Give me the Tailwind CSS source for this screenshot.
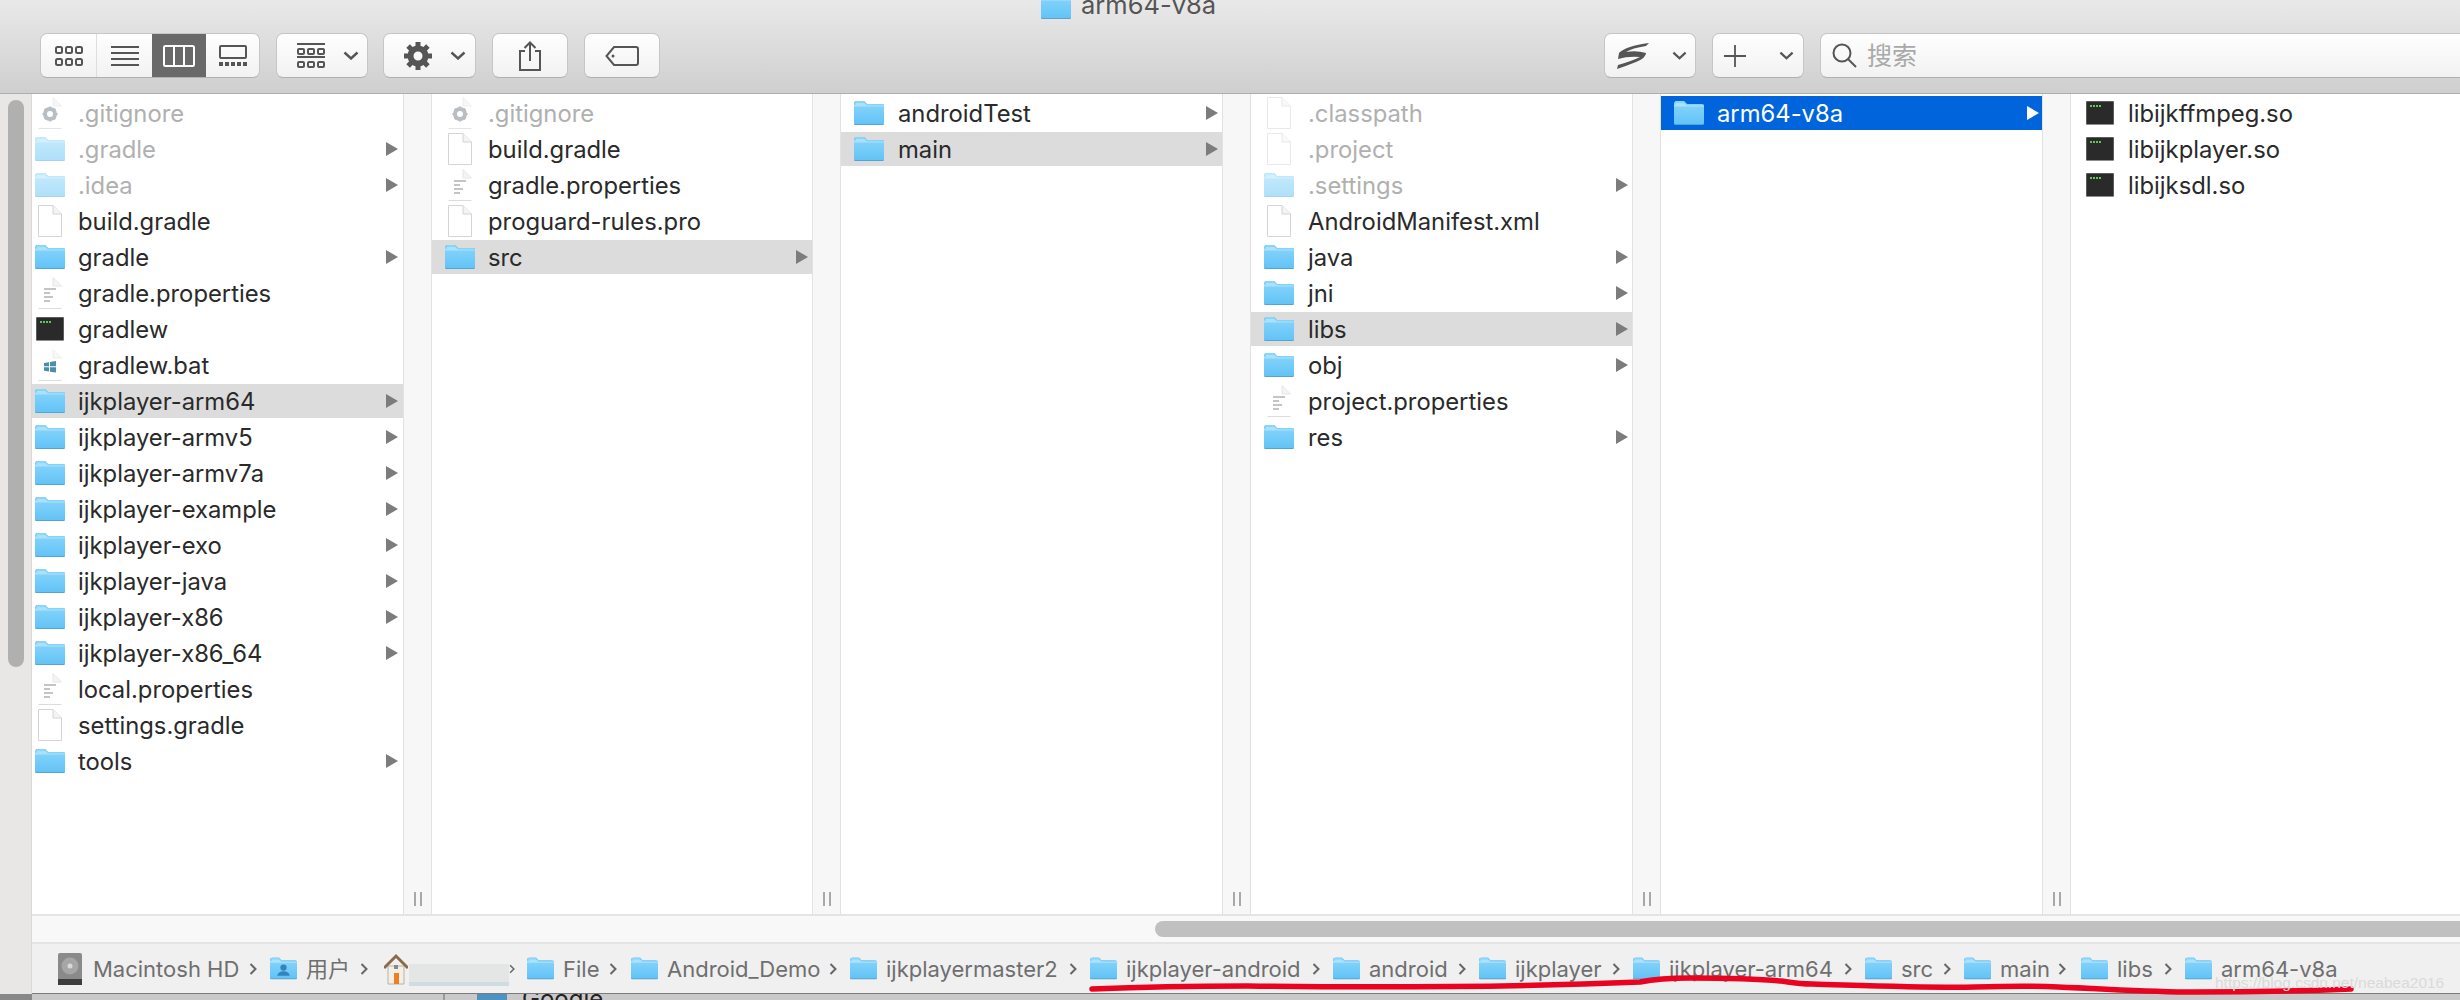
<!DOCTYPE html>
<html lang="zh">
  <head>
    <meta charset="UTF-8" />
    <title>arm64-v8a</title>
    <script src="https://cdn.jsdelivr.net/npm/@tailwindcss/browser@4"></script>
  </head>
  <body class="bg-[#d8d8d8] overflow-hidden font-[Inter,'Noto_Sans_CJK_SC',sans-serif]">
    <!-- icon sheet -->
    <svg class="absolute w-0 h-0">
      <defs>
        <linearGradient id="fg" x1="0" y1="0" x2="0" y2="1">
          <stop offset="0" stop-color="#8ad6fb" />
          <stop offset="1" stop-color="#62c3f6" />
        </linearGradient>
      </defs>
      <symbol id="folder" viewBox="0 0 30 32">
        <path d="M0 7.500Q0 4 2.500 4H10L13 7H28Q30 7 30 9V26.500Q30 28 28.500 28H1.500Q0 28 0 26.500Z" fill="#4d9ccb" />
        <path d="M0 7.500Q0 4 2.500 4H10L13 7H28Q30 7 30 9V26Q30 27.200 28.500 27.200H1.500Q0 27.200 0 26Z" fill="url(#fg)" />
        <path d="M0 9.500H30V8.600H13L10 6H2V7.500L0 8Z" fill="#a9e2fd" />
      </symbol>
      <symbol id="doc" viewBox="0 0 30 32">
        <path d="M3.500 .5H18L26.500 9V31.500H3.500Z" fill="#fff" stroke="#d4d4d4" />
        <path d="M18 .5V9H26.500" fill="#f4f4f4" stroke="#d4d4d4" />
      </symbol>
      <symbol id="text" viewBox="0 0 30 32">
        <path d="M3.500 31.500H26.500" stroke="#dcdcdc" fill="none" />
        <path d="M18 .5L26.500 9L18 9Z" fill="#f4f4f4" stroke="#e6e6e6" />
        <path d="M9 12H21M9 16H15M9 20H18M9 24H15" stroke="#c4c4c4" stroke-width="2" />
      </symbol>
      <symbol id="gear" viewBox="0 0 30 32">
        <path d="M3.500 31.500H26.500" stroke="#e4e4e4" fill="none" />
        <path d="M18 .5L26.500 9L18 9Z" fill="#f7f7f7" stroke="#eeeeee" />
        <circle cx="15" cy="17" r="5" fill="none" stroke="#b8bec2" stroke-width="4" />
        <path d="M15 9.500V24.500M7.500 17H22.500M9.700 11.700L20.300 22.300M20.300 11.700L9.700 22.300" stroke="#b8bec2" stroke-width="2.200" stroke-dasharray="2.600 9.800" />
      </symbol>
      <symbol id="bat" viewBox="0 0 30 32">
        <path d="M3.500 31.500H26.500" stroke="#dcdcdc" fill="none" />
        <path d="M18 .5L26.500 9L18 9Z" fill="#f7f7f7" stroke="#eeeeee" />
        <path d="M9 14L14 13.200V17.300H9ZM15 13L21 12V17.300H15ZM9 18.300H14V22.500L9 21.700ZM15 18.300H21V23.500L15 22.700Z" fill="#4a8ea8" />
      </symbol>
      <symbol id="term" viewBox="0 0 30 32">
        <rect x="1" y="4" width="28" height="24" rx="1" fill="#8d8d8d" />
        <rect x="1.500" y="4.500" width="27" height="22.500" fill="#2a2a2a" />
        <path d="M5 9H7M8 9H10M11 9H13M14 9H16" stroke="#5ac85a" stroke-width="2" />
      </symbol>
      <symbol id="arrow" viewBox="0 0 12 14">
        <path d="M0 0L12 7L0 14Z" fill="#7c7c7c" />
      </symbol>
      <symbol id="chev" viewBox="0 0 16 9">
        <path d="M1.500 1.500L8 7.500L14.500 1.500" fill="none" stroke="#555" stroke-width="2.400" />
      </symbol>
      <symbol id="crumb" viewBox="0 0 8 12">
        <path d="M1.500 1L6.500 6L1.500 11" fill="none" stroke="#666" stroke-width="2" />
      </symbol>
    </svg>

    <div class="relative w-[2460px] h-[1000px] overflow-hidden flex flex-col">
      <!-- title + toolbar -->
      <div class="h-[94px] flex-none border-b border-[#aeaeae] bg-gradient-to-b from-[#e9e9e9] to-[#cfcfcf]">
        <div class="h-[33px] flex items-end pl-[1041px] overflow-hidden">
          <div class="flex items-center gap-[10px] mb-[13px]">
            <svg class="w-[30px] h-[32px] flex-none -mb-[4px]"><use href="#folder" /></svg>
            <span class="text-[25.500px] leading-[30px] text-[#555]">arm64-v8a</span>
          </div>
        </div>
        <div class="flex h-[45px] pl-[40px]">
          <!-- view switcher -->
          <div class="flex w-[220px] rounded-[7px] border border-[#c6c6c6] border-b-[#b0b0b0] bg-gradient-to-b from-[#fefefe] to-[#f2f2f2] overflow-hidden flex-none">
            <div class="w-[56px] flex items-center justify-center border-r border-[#dedede]">
              <svg width="30" height="22" viewBox="0 0 30 22" fill="none" stroke="#555" stroke-width="2">
                <rect x="2" y="2" width="6" height="6" rx="1.500" /><rect x="12" y="2" width="6" height="6" rx="1.500" /><rect x="22" y="2" width="6" height="6" rx="1.500" />
                <rect x="2" y="14" width="6" height="6" rx="1.500" /><rect x="12" y="14" width="6" height="6" rx="1.500" /><rect x="22" y="14" width="6" height="6" rx="1.500" />
              </svg>
            </div>
            <div class="w-[55px] flex items-center justify-center">
              <svg width="28" height="22" viewBox="0 0 28 22" stroke="#555" stroke-width="2"><path d="M0 2H28M0 8H28M0 14H28M0 20H28" /></svg>
            </div>
            <div class="w-[54px] flex items-center justify-center bg-[#696969]">
              <svg width="32" height="22" viewBox="0 0 32 22" fill="none" stroke="#fff" stroke-width="2"><rect x="1" y="1" width="30" height="20" rx="1.500" /><path d="M11 1V21M21 1V21" /></svg>
            </div>
            <div class="flex-1 flex items-center justify-center">
              <svg width="28" height="22" viewBox="0 0 28 22" fill="none" stroke="#555" stroke-width="2"><rect x="1" y="1" width="26" height="12" rx="1" /><path d="M0 19H28" stroke-width="4" stroke-dasharray="4 2" /></svg>
            </div>
          </div>
          <!-- group by -->
          <div class="ml-[16px] w-[92px] flex-none flex items-center pl-[20px] rounded-[7px] border border-[#c6c6c6] border-b-[#b0b0b0] bg-gradient-to-b from-[#fefefe] to-[#f2f2f2]">
            <svg width="28" height="26" viewBox="0 0 28 26" fill="none" stroke="#555" stroke-width="2">
              <path d="M0 1H28M0 14H28" />
              <rect x="1" y="6" width="6" height="5" rx="1" /><rect x="11" y="6" width="6" height="5" rx="1" /><rect x="21" y="6" width="6" height="5" rx="1" />
              <rect x="1" y="19" width="6" height="5" rx="1" /><rect x="11" y="19" width="6" height="5" rx="1" /><rect x="21" y="19" width="6" height="5" rx="1" />
            </svg>
            <svg class="ml-[18px] w-[16px] h-[9px]"><use href="#chev" /></svg>
          </div>
          <!-- action -->
          <div class="ml-[15px] w-[93px] flex-none flex items-center pl-[20px] rounded-[7px] border border-[#c6c6c6] border-b-[#b0b0b0] bg-gradient-to-b from-[#fefefe] to-[#f2f2f2]">
            <svg width="28" height="28" viewBox="0 0 28 28" fill="none" stroke="#555">
              <circle cx="14" cy="14" r="7.500" stroke-width="6" />
              <path d="M14 0V28M0 14H28M4.100 4.100L23.900 23.900M23.900 4.100L4.100 23.900" stroke-width="5" stroke-dasharray="5 18" stroke-dashoffset="0" />
            </svg>
            <svg class="ml-[18px] w-[16px] h-[9px]"><use href="#chev" /></svg>
          </div>
          <!-- share -->
          <div class="ml-[16px] w-[76px] flex-none flex items-center justify-center rounded-[7px] border border-[#c6c6c6] border-b-[#b0b0b0] bg-gradient-to-b from-[#fefefe] to-[#f2f2f2]">
            <svg width="22" height="30" viewBox="0 0 22 30" fill="none" stroke="#555" stroke-width="2"><path d="M6 10H1V29H21V10H16M11 20V2M5.500 7L11 1.500L16.500 7" /></svg>
          </div>
          <!-- tags -->
          <div class="ml-[16px] w-[76px] flex-none flex items-center justify-center rounded-[7px] border border-[#c6c6c6] border-b-[#b0b0b0] bg-gradient-to-b from-[#fefefe] to-[#f2f2f2]">
            <svg width="34" height="20" viewBox="0 0 34 20" fill="none" stroke="#555" stroke-width="2"><path d="M9 1H31Q33 1 33 3V17Q33 19 31 19H9L1.500 10Z" /><circle cx="8" cy="10" r="1.500" fill="#555" stroke="none" /></svg>
          </div>
          <!-- extension -->
          <div class="ml-[944px] w-[92px] flex-none flex items-center pl-[11px] rounded-[7px] border border-[#c6c6c6] border-b-[#b0b0b0] bg-gradient-to-b from-[#fefefe] to-[#f2f2f2]">
            <svg width="34" height="26" viewBox="0 0 34 26"><path d="M3 10Q10 3 33 0L30 3Q16 5 10 9Q20 7 30 10Q30 15 20 19Q10 23 1 26L2 22Q16 18 24 14Q12 13 2 16Z" fill="#555" /></svg>
            <svg class="ml-[22px] w-[15px] h-[9px]"><use href="#chev" /></svg>
          </div>
          <!-- new -->
          <div class="ml-[16px] w-[92px] flex-none flex items-center pl-[11px] rounded-[7px] border border-[#c6c6c6] border-b-[#b0b0b0] bg-gradient-to-b from-[#fefefe] to-[#f2f2f2]">
            <svg width="22" height="22" viewBox="0 0 22 22" stroke="#555" stroke-width="1.800"><path d="M11 0V22M0 11H22" /></svg>
            <svg class="ml-[33px] w-[15px] h-[9px]"><use href="#chev" /></svg>
          </div>
          <!-- search -->
          <div class="ml-[16px] w-[680px] flex-none flex items-center pl-[11px] rounded-l-[7px] border border-[#c6c6c6] border-b-[#b0b0b0] bg-gradient-to-b from-[#fefefe] to-[#f2f2f2]">
            <svg width="25" height="25" viewBox="0 0 25 25" fill="none" stroke="#555" stroke-width="2"><circle cx="10" cy="10" r="8.500" /><path d="M16 16L24 24" /></svg>
            <span class="ml-[10px] pt-[2px] text-[25px] text-[#a9a9a9]">搜索</span>
          </div>
        </div>
      </div>

      <div class="flex-none h-[900px] flex">
        <!-- sidebar scroller -->
        <div class="w-[32px] flex-none bg-[#e8e7e6] border-r border-[#dadada] pt-[6px] pl-[8px]">
          <div class="w-[16px] h-[567px] rounded-full bg-[#b0b0b0]"></div>
        </div>

        <div class="flex-1 flex flex-col min-w-0 bg-white">
          <!-- browser columns -->
          <div class="h-[820px] flex-none flex text-[23.800px] text-[#2a2a2a]">
            <!-- column 1 -->
            <div class="w-[371px] flex-none pt-[2px] pl-px">
              <div class="flex items-center h-[34px] mb-[2px] pl-[2px] pr-[5px] text-[#b0b0b0]"><svg class="w-[30px] h-[32px] flex-none"><use href="#gear" /></svg><span class="ml-[13px] pt-[2px]">.gitignore</span></div>
              <div class="flex items-center h-[34px] mb-[2px] pl-[2px] pr-[5px] text-[#b0b0b0]"><svg class="w-[30px] h-[32px] flex-none opacity-50"><use href="#folder" /></svg><span class="ml-[13px] pt-[2px]">.gradle</span><svg class="ml-auto w-[12px] h-[14px]"><use href="#arrow" /></svg></div>
              <div class="flex items-center h-[34px] mb-[2px] pl-[2px] pr-[5px] text-[#b0b0b0]"><svg class="w-[30px] h-[32px] flex-none opacity-50"><use href="#folder" /></svg><span class="ml-[13px] pt-[2px]">.idea</span><svg class="ml-auto w-[12px] h-[14px]"><use href="#arrow" /></svg></div>
              <div class="flex items-center h-[34px] mb-[2px] pl-[2px] pr-[5px]"><svg class="w-[30px] h-[32px] flex-none"><use href="#doc" /></svg><span class="ml-[13px] pt-[2px]">build.gradle</span></div>
              <div class="flex items-center h-[34px] mb-[2px] pl-[2px] pr-[5px]"><svg class="w-[30px] h-[32px] flex-none"><use href="#folder" /></svg><span class="ml-[13px] pt-[2px]">gradle</span><svg class="ml-auto w-[12px] h-[14px]"><use href="#arrow" /></svg></div>
              <div class="flex items-center h-[34px] mb-[2px] pl-[2px] pr-[5px]"><svg class="w-[30px] h-[32px] flex-none"><use href="#text" /></svg><span class="ml-[13px] pt-[2px]">gradle.properties</span></div>
              <div class="flex items-center h-[34px] mb-[2px] pl-[2px] pr-[5px]"><svg class="w-[30px] h-[32px] flex-none"><use href="#term" /></svg><span class="ml-[13px] pt-[2px]">gradlew</span></div>
              <div class="flex items-center h-[34px] mb-[2px] pl-[2px] pr-[5px]"><svg class="w-[30px] h-[32px] flex-none"><use href="#bat" /></svg><span class="ml-[13px] pt-[2px]">gradlew.bat</span></div>
              <div class="flex items-center h-[34px] mb-[2px] pl-[2px] pr-[5px] bg-[#dcdcdc] -ml-px"><svg class="w-[30px] h-[32px] flex-none ml-px"><use href="#folder" /></svg><span class="ml-[13px] pt-[2px]">ijkplayer-arm64</span><svg class="ml-auto w-[12px] h-[14px]"><use href="#arrow" /></svg></div>
              <div class="flex items-center h-[34px] mb-[2px] pl-[2px] pr-[5px]"><svg class="w-[30px] h-[32px] flex-none"><use href="#folder" /></svg><span class="ml-[13px] pt-[2px]">ijkplayer-armv5</span><svg class="ml-auto w-[12px] h-[14px]"><use href="#arrow" /></svg></div>
              <div class="flex items-center h-[34px] mb-[2px] pl-[2px] pr-[5px]"><svg class="w-[30px] h-[32px] flex-none"><use href="#folder" /></svg><span class="ml-[13px] pt-[2px]">ijkplayer-armv7a</span><svg class="ml-auto w-[12px] h-[14px]"><use href="#arrow" /></svg></div>
              <div class="flex items-center h-[34px] mb-[2px] pl-[2px] pr-[5px]"><svg class="w-[30px] h-[32px] flex-none"><use href="#folder" /></svg><span class="ml-[13px] pt-[2px]">ijkplayer-example</span><svg class="ml-auto w-[12px] h-[14px]"><use href="#arrow" /></svg></div>
              <div class="flex items-center h-[34px] mb-[2px] pl-[2px] pr-[5px]"><svg class="w-[30px] h-[32px] flex-none"><use href="#folder" /></svg><span class="ml-[13px] pt-[2px]">ijkplayer-exo</span><svg class="ml-auto w-[12px] h-[14px]"><use href="#arrow" /></svg></div>
              <div class="flex items-center h-[34px] mb-[2px] pl-[2px] pr-[5px]"><svg class="w-[30px] h-[32px] flex-none"><use href="#folder" /></svg><span class="ml-[13px] pt-[2px]">ijkplayer-java</span><svg class="ml-auto w-[12px] h-[14px]"><use href="#arrow" /></svg></div>
              <div class="flex items-center h-[34px] mb-[2px] pl-[2px] pr-[5px]"><svg class="w-[30px] h-[32px] flex-none"><use href="#folder" /></svg><span class="ml-[13px] pt-[2px]">ijkplayer-x86</span><svg class="ml-auto w-[12px] h-[14px]"><use href="#arrow" /></svg></div>
              <div class="flex items-center h-[34px] mb-[2px] pl-[2px] pr-[5px]"><svg class="w-[30px] h-[32px] flex-none"><use href="#folder" /></svg><span class="ml-[13px] pt-[2px]">ijkplayer-x86_64</span><svg class="ml-auto w-[12px] h-[14px]"><use href="#arrow" /></svg></div>
              <div class="flex items-center h-[34px] mb-[2px] pl-[2px] pr-[5px]"><svg class="w-[30px] h-[32px] flex-none"><use href="#text" /></svg><span class="ml-[13px] pt-[2px]">local.properties</span></div>
              <div class="flex items-center h-[34px] mb-[2px] pl-[2px] pr-[5px]"><svg class="w-[30px] h-[32px] flex-none"><use href="#doc" /></svg><span class="ml-[13px] pt-[2px]">settings.gradle</span></div>
              <div class="flex items-center h-[34px] mb-[2px] pl-[2px] pr-[5px]"><svg class="w-[30px] h-[32px] flex-none"><use href="#folder" /></svg><span class="ml-[13px] pt-[2px]">tools</span><svg class="ml-auto w-[12px] h-[14px]"><use href="#arrow" /></svg></div>
            </div>
            <div class="w-[29px] flex-none flex items-end justify-center gap-[4px] pb-[8px] bg-[#f7f7f7] border-x border-[#e2e2e2]"><i class="w-[2px] h-[14px] bg-[#a8a8a8]"></i><i class="w-[2px] h-[14px] bg-[#a8a8a8]"></i></div>

            <!-- column 2 -->
            <div class="w-[380px] flex-none pt-[2px]">
              <div class="flex items-center h-[34px] mb-[2px] pl-[13px] pr-[4px] text-[#b0b0b0]"><svg class="w-[30px] h-[32px] flex-none"><use href="#gear" /></svg><span class="ml-[13px] pt-[2px]">.gitignore</span></div>
              <div class="flex items-center h-[34px] mb-[2px] pl-[13px] pr-[4px]"><svg class="w-[30px] h-[32px] flex-none"><use href="#doc" /></svg><span class="ml-[13px] pt-[2px]">build.gradle</span></div>
              <div class="flex items-center h-[34px] mb-[2px] pl-[13px] pr-[4px]"><svg class="w-[30px] h-[32px] flex-none"><use href="#text" /></svg><span class="ml-[13px] pt-[2px]">gradle.properties</span></div>
              <div class="flex items-center h-[34px] mb-[2px] pl-[13px] pr-[4px]"><svg class="w-[30px] h-[32px] flex-none"><use href="#doc" /></svg><span class="ml-[13px] pt-[2px]">proguard-rules.pro</span></div>
              <div class="flex items-center h-[34px] mb-[2px] pl-[13px] pr-[4px] bg-[#dcdcdc]"><svg class="w-[30px] h-[32px] flex-none"><use href="#folder" /></svg><span class="ml-[13px] pt-[2px]">src</span><svg class="ml-auto w-[12px] h-[14px]"><use href="#arrow" /></svg></div>
            </div>
            <div class="w-[29px] flex-none flex items-end justify-center gap-[4px] pb-[8px] bg-[#f7f7f7] border-x border-[#e2e2e2]"><i class="w-[2px] h-[14px] bg-[#a8a8a8]"></i><i class="w-[2px] h-[14px] bg-[#a8a8a8]"></i></div>

            <!-- column 3 -->
            <div class="w-[381px] flex-none pt-[2px]">
              <div class="flex items-center h-[34px] mb-[2px] pl-[13px] pr-[4px]"><svg class="w-[30px] h-[32px] flex-none"><use href="#folder" /></svg><span class="ml-[14px] pt-[2px]">androidTest</span><svg class="ml-auto w-[12px] h-[14px]"><use href="#arrow" /></svg></div>
              <div class="flex items-center h-[34px] mb-[2px] pl-[13px] pr-[4px] bg-[#dcdcdc]"><svg class="w-[30px] h-[32px] flex-none"><use href="#folder" /></svg><span class="ml-[14px] pt-[2px]">main</span><svg class="ml-auto w-[12px] h-[14px]"><use href="#arrow" /></svg></div>
            </div>
            <div class="w-[29px] flex-none flex items-end justify-center gap-[4px] pb-[8px] bg-[#f7f7f7] border-x border-[#e2e2e2]"><i class="w-[2px] h-[14px] bg-[#a8a8a8]"></i><i class="w-[2px] h-[14px] bg-[#a8a8a8]"></i></div>

            <!-- column 4 -->
            <div class="w-[381px] flex-none pt-[2px]">
              <div class="flex items-center h-[34px] mb-[2px] pl-[13px] pr-[4px] text-[#b0b0b0]"><svg class="w-[30px] h-[32px] flex-none opacity-50"><use href="#doc" /></svg><span class="ml-[14px] pt-[2px]">.classpath</span></div>
              <div class="flex items-center h-[34px] mb-[2px] pl-[13px] pr-[4px] text-[#b0b0b0]"><svg class="w-[30px] h-[32px] flex-none opacity-50"><use href="#doc" /></svg><span class="ml-[14px] pt-[2px]">.project</span></div>
              <div class="flex items-center h-[34px] mb-[2px] pl-[13px] pr-[4px] text-[#b0b0b0]"><svg class="w-[30px] h-[32px] flex-none opacity-50"><use href="#folder" /></svg><span class="ml-[14px] pt-[2px]">.settings</span><svg class="ml-auto w-[12px] h-[14px]"><use href="#arrow" /></svg></div>
              <div class="flex items-center h-[34px] mb-[2px] pl-[13px] pr-[4px]"><svg class="w-[30px] h-[32px] flex-none"><use href="#doc" /></svg><span class="ml-[14px] pt-[2px]">AndroidManifest.xml</span></div>
              <div class="flex items-center h-[34px] mb-[2px] pl-[13px] pr-[4px]"><svg class="w-[30px] h-[32px] flex-none"><use href="#folder" /></svg><span class="ml-[14px] pt-[2px]">java</span><svg class="ml-auto w-[12px] h-[14px]"><use href="#arrow" /></svg></div>
              <div class="flex items-center h-[34px] mb-[2px] pl-[13px] pr-[4px]"><svg class="w-[30px] h-[32px] flex-none"><use href="#folder" /></svg><span class="ml-[14px] pt-[2px]">jni</span><svg class="ml-auto w-[12px] h-[14px]"><use href="#arrow" /></svg></div>
              <div class="flex items-center h-[34px] mb-[2px] pl-[13px] pr-[4px] bg-[#dcdcdc]"><svg class="w-[30px] h-[32px] flex-none"><use href="#folder" /></svg><span class="ml-[14px] pt-[2px]">libs</span><svg class="ml-auto w-[12px] h-[14px]"><use href="#arrow" /></svg></div>
              <div class="flex items-center h-[34px] mb-[2px] pl-[13px] pr-[4px]"><svg class="w-[30px] h-[32px] flex-none"><use href="#folder" /></svg><span class="ml-[14px] pt-[2px]">obj</span><svg class="ml-auto w-[12px] h-[14px]"><use href="#arrow" /></svg></div>
              <div class="flex items-center h-[34px] mb-[2px] pl-[13px] pr-[4px]"><svg class="w-[30px] h-[32px] flex-none"><use href="#text" /></svg><span class="ml-[14px] pt-[2px]">project.properties</span></div>
              <div class="flex items-center h-[34px] mb-[2px] pl-[13px] pr-[4px]"><svg class="w-[30px] h-[32px] flex-none"><use href="#folder" /></svg><span class="ml-[14px] pt-[2px]">res</span><svg class="ml-auto w-[12px] h-[14px]"><use href="#arrow" /></svg></div>
            </div>
            <div class="w-[29px] flex-none flex items-end justify-center gap-[4px] pb-[8px] bg-[#f7f7f7] border-x border-[#e2e2e2]"><i class="w-[2px] h-[14px] bg-[#a8a8a8]"></i><i class="w-[2px] h-[14px] bg-[#a8a8a8]"></i></div>

            <!-- column 5 -->
            <div class="w-[381px] flex-none pt-[2px]">
              <div class="flex items-center h-[34px] mb-[2px] pl-[13px] pr-[3px] bg-[#0065dc] text-white"><svg class="w-[30px] h-[32px] flex-none"><use href="#folder" /></svg><span class="ml-[13px] pt-[2px]">arm64-v8a</span><svg class="ml-auto w-[12px] h-[14px]" viewBox="0 0 12 14"><path d="M0 0L12 7L0 14Z" fill="#fff" /></svg></div>
            </div>
            <div class="w-[29px] flex-none flex items-end justify-center gap-[4px] pb-[8px] bg-[#f7f7f7] border-x border-[#e2e2e2]"><i class="w-[2px] h-[14px] bg-[#a8a8a8]"></i><i class="w-[2px] h-[14px] bg-[#a8a8a8]"></i></div>

            <!-- column 6 -->
            <div class="flex-1 pt-[2px]">
              <div class="flex items-center h-[34px] mb-[2px] pl-[14px]"><svg class="w-[30px] h-[32px] flex-none"><use href="#term" /></svg><span class="ml-[13px] pt-[2px]">libijkffmpeg.so</span></div>
              <div class="flex items-center h-[34px] mb-[2px] pl-[14px]"><svg class="w-[30px] h-[32px] flex-none"><use href="#term" /></svg><span class="ml-[13px] pt-[2px]">libijkplayer.so</span></div>
              <div class="flex items-center h-[34px] mb-[2px] pl-[14px]"><svg class="w-[30px] h-[32px] flex-none"><use href="#term" /></svg><span class="ml-[13px] pt-[2px]">libijksdl.so</span></div>
            </div>
          </div>

          <!-- horizontal scroller -->
          <div class="h-[30px] flex-none flex items-center bg-[#f8f8f8] border-y-2 border-[#e4e4e4] pl-[1123px]">
            <div class="flex-1 h-[16px] rounded-l-full bg-[#c0c0c0]"></div>
          </div>

          <!-- path bar -->
          <div class="h-[50px] flex-none flex items-center bg-[#f0f0f0] border-b border-[#7b7b7b] pl-[25px] text-[22px] text-[#6f6f6f]">
            <div class="w-[213px] flex-none flex items-center">
              <svg class="flex-none" width="26" height="34" viewBox="0 0 26 34"><rect x="1" y="1" width="24" height="32" rx="2" fill="#8a8a8a" /><rect x="1" y="27" width="24" height="6" fill="#3d3d3d" /><circle cx="13" cy="14" r="8.500" fill="#a6a6a6" /><circle cx="13" cy="14" r="2.500" fill="#d8d8d8" /></svg>
              <span class="ml-[10px] pt-[2px]">Macintosh HD</span>
              <svg class="ml-auto mr-[13px] w-[8px] h-[12px]"><use href="#crumb" /></svg>
            </div>
            <div class="w-[114px] flex-none flex items-center">
              <svg class="flex-none w-[27px] h-[29px]" viewBox="0 0 30 32"><use href="#folder" /><circle cx="15" cy="15" r="3.500" fill="#2f86bb" /><path d="M8 24Q9 19 15 19Q21 19 22 24Z" fill="#2f86bb" /></svg>
              <span class="ml-[9px] pt-[2px]">用户</span>
              <svg class="ml-auto mr-[16px] w-[8px] h-[12px]"><use href="#crumb" /></svg>
            </div>
            <div class="w-[143px] flex-none flex items-center">
              <svg class="flex-none" width="24" height="32" viewBox="0 0 24 32"><path d="M4 13H20V31H4Z" fill="#f3efe6" stroke="#b9b2a4" /><path d="M0 15L12 3L24 15" fill="none" stroke="#8a6a4a" stroke-width="3" /><rect x="10" y="20" width="5" height="11" fill="#ee7f22" /><rect x="10" y="12" width="4" height="4" fill="#888" /></svg>
              <!-- blurred account name -->
              <div class="ml-[1px] w-[100px] h-[22px] mt-[12px] bg-[#e4e5e5] border-b-4 border-[#cfdde3] flex-none"></div>
              <svg class="ml-auto mr-[12px] w-[8px] h-[12px]"><use href="#crumb" /></svg>
            </div>
            <div class="w-[104px] flex-none flex items-center">
              <svg class="flex-none w-[27px] h-[29px]"><use href="#folder" /></svg>
              <span class="ml-[9px] pt-[2px]">File</span>
              <svg class="ml-auto mr-[14px] w-[8px] h-[12px]"><use href="#crumb" /></svg>
            </div>
            <div class="w-[219px] flex-none flex items-center">
              <svg class="flex-none w-[27px] h-[29px]"><use href="#folder" /></svg>
              <span class="ml-[9px] pt-[2px]">Android_Demo</span>
              <svg class="ml-auto mr-[13px] w-[8px] h-[12px]"><use href="#crumb" /></svg>
            </div>
            <div class="w-[240px] flex-none flex items-center">
              <svg class="flex-none w-[27px] h-[29px]"><use href="#folder" /></svg>
              <span class="ml-[9px] pt-[2px]">ijkplayermaster2</span>
              <svg class="ml-auto mr-[13px] w-[8px] h-[12px]"><use href="#crumb" /></svg>
            </div>
            <div class="w-[243px] flex-none flex items-center">
              <svg class="flex-none w-[27px] h-[29px]"><use href="#folder" /></svg>
              <span class="ml-[9px] pt-[2px]">ijkplayer-android</span>
              <svg class="ml-auto mr-[13px] w-[8px] h-[12px]"><use href="#crumb" /></svg>
            </div>
            <div class="w-[146px] flex-none flex items-center">
              <svg class="flex-none w-[27px] h-[29px]"><use href="#folder" /></svg>
              <span class="ml-[9px] pt-[2px]">android</span>
              <svg class="ml-auto mr-[13px] w-[8px] h-[12px]"><use href="#crumb" /></svg>
            </div>
            <div class="w-[154px] flex-none flex items-center">
              <svg class="flex-none w-[27px] h-[29px]"><use href="#folder" /></svg>
              <span class="ml-[9px] pt-[2px]">ijkplayer</span>
              <svg class="ml-auto mr-[13px] w-[8px] h-[12px]"><use href="#crumb" /></svg>
            </div>
            <div class="w-[232px] flex-none flex items-center">
              <svg class="flex-none w-[27px] h-[29px]"><use href="#folder" /></svg>
              <span class="ml-[9px] pt-[2px]">ijkplayer-arm64</span>
              <svg class="ml-auto mr-[13px] w-[8px] h-[12px]"><use href="#crumb" /></svg>
            </div>
            <div class="w-[99px] flex-none flex items-center">
              <svg class="flex-none w-[27px] h-[29px]"><use href="#folder" /></svg>
              <span class="ml-[9px] pt-[2px]">src</span>
              <svg class="ml-auto mr-[13px] w-[8px] h-[12px]"><use href="#crumb" /></svg>
            </div>
            <div class="w-[117px] flex-none flex items-center">
              <svg class="flex-none w-[27px] h-[29px]"><use href="#folder" /></svg>
              <span class="ml-[9px] pt-[2px]">main</span>
              <svg class="ml-auto mr-[15px] w-[8px] h-[12px]"><use href="#crumb" /></svg>
            </div>
            <div class="w-[104px] flex-none flex items-center">
              <svg class="flex-none w-[27px] h-[29px]"><use href="#folder" /></svg>
              <span class="ml-[9px] pt-[2px]">libs</span>
              <svg class="ml-auto mr-[13px] w-[8px] h-[12px]"><use href="#crumb" /></svg>
            </div>
            <div class="flex-none flex items-center">
              <svg class="flex-none w-[27px] h-[29px]"><use href="#folder" /></svg>
              <span class="ml-[9px] pt-[2px]">arm64-v8a</span>
            </div>
          </div>
        </div>
      </div>

      <!-- window behind -->
      <div class="flex-1 flex bg-[#c9c9c9] overflow-hidden">
        <div class="w-[32px] flex-none bg-[#888]"></div>
        <div class="w-[413px] flex-none border-r-2 border-[#9a9a9a]"></div>
        <div class="w-[32px] flex-none"></div>
        <div class="w-[30px] h-[6px] flex-none bg-[#4c93c3]"></div>
        <div class="ml-[15px] -mt-[9px] text-[24px] leading-[28px] text-[#222]">Google</div>
      </div>

      <!-- red marker scribble and watermark, drawn over the path bar -->
      <svg class="absolute left-0 top-0 pointer-events-none" width="2460" height="1000" fill="none">
        <path d="M1092 989C1140 987 1200 986 1248 986C1400 988 1540 986 1640 982C1655 979 1670 978 1690 978C1720 978 1760 979 1781 981C1795 983 1800 984 1812 984C1880 986 1930 988 1975 987C2010 986 2040 986 2058 987C2110 989 2150 992 2194 992C2250 992 2300 991 2351 989" stroke="#ea0320" stroke-width="5.500" stroke-linecap="round" />
      </svg>
      <div class="absolute left-[2215px] top-[973px] text-[15.500px] leading-[20px] text-[#dadada] font-['Liberation_Sans',sans-serif]">https://blog.csdn.net/neabea2016</div>
    </div>
  </body>
</html>
